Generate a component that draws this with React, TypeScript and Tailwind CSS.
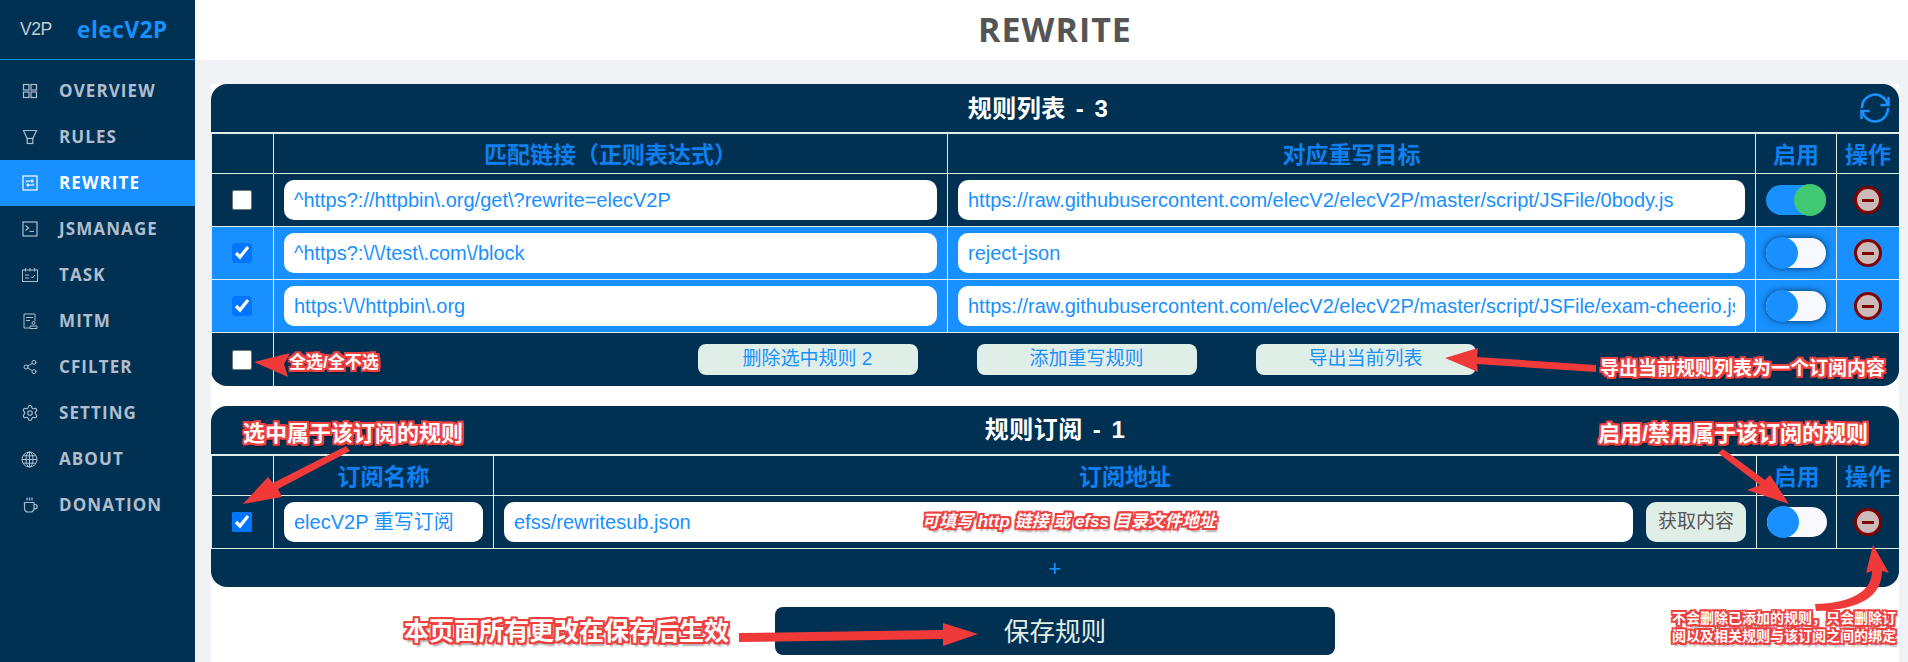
import { Settings, Share2 } from "lucide-react"
import type { ReactNode } from "react"

const NAVY = "bg-[#003153]"
const LINE = "border-[#e0eee8]"

// red outlined text the screenshot's author painted on top of the page
const noteText =
  "absolute -translate-y-1/2 whitespace-nowrap font-bold text-white [text-shadow:2px_0_0_#ef3f3f,-2px_0_0_#ef3f3f,0_2px_0_#ef3f3f,0_-2px_0_#ef3f3f,2px_2px_0_#ef3f3f,-2px_2px_0_#ef3f3f,2px_-2px_0_#ef3f3f,-2px_-2px_0_#ef3f3f,2px_4px_2px_#00000055]"

const stroke = {
  fill: "none",
  stroke: "currentColor",
  strokeWidth: 1.2,
}

const nav: { label: string; active?: boolean; icon: ReactNode }[] = [
  {
    label: "OVERVIEW",
    icon: (
      <svg viewBox="0 0 16 16" className="h-4 w-4" {...stroke}>
        <rect x="1.5" y="1.5" width="5.5" height="5.5" />
        <rect x="9" y="1.5" width="5.5" height="5.5" />
        <rect x="1.5" y="9" width="5.5" height="5.5" />
        <rect x="9" y="9" width="5.5" height="5.5" />
      </svg>
    ),
  },
  {
    label: "RULES",
    icon: (
      <svg viewBox="0 0 16 16" className="h-4 w-4" {...stroke}>
        <path d="M1.5 1.5h13L10.800 9.500H5.200z" />
        <rect x="5.200" y="9.500" width="5.600" height="5" />
      </svg>
    ),
  },
  {
    label: "REWRITE",
    active: true,
    icon: (
      <svg viewBox="0 0 16 16" className="h-4 w-4" {...stroke}>
        <rect x="1" y="1" width="14" height="14" />
        <path d="M4.500 7.500V6h6.500M9.500 4.500 11 6 9.500 7.500M11.500 8.500V10H5M6.500 11.500 5 10l1.500-1.500" />
      </svg>
    ),
  },
  {
    label: "JSMANAGE",
    icon: (
      <svg viewBox="0 0 16 16" className="h-4 w-4" {...stroke}>
        <rect x="1" y="1" width="14" height="14" />
        <path d="m3.500 4.500 3 2.500-3 2.500M7.500 10.500H12" />
      </svg>
    ),
  },
  {
    label: "TASK",
    icon: (
      <svg viewBox="0 0 16 16" className="h-4 w-4" {...stroke} strokeWidth={1}>
        <rect x="0.500" y="3" width="15" height="11.500" />
        <path d="M3.500 1v3.500M8 1v3.500M12.500 1v3.500M3 8h4M3 11h4M9 9.500l1.500 1.500L13 8" />
      </svg>
    ),
  },
  {
    label: "MITM",
    icon: (
      <svg viewBox="0 0 16 16" className="h-4 w-4" {...stroke} strokeWidth={1}>
        <path d="M8 15H2V1h11v7" />
        <path d="M4 4.500h7M4 7.500h4" />
        <circle cx="11.500" cy="10" r="1.500" />
        <path d="M8 15.500v-2.500h7v2.500z" />
      </svg>
    ),
  },
  { label: "CFILTER", icon: <Share2 className="h-4 w-4" strokeWidth={1.5} /> },
  { label: "SETTING", icon: <Settings className="h-[18px] w-[18px] shrink-0" strokeWidth={1.5} /> },
  {
    label: "ABOUT",
    icon: (
      <svg viewBox="0 0 17 17" className="h-[17px] w-[17px] shrink-0" {...stroke} strokeWidth={1}>
        <circle cx="8.500" cy="8.500" r="7.500" />
        <ellipse cx="8.500" cy="8.500" rx="3.500" ry="7.500" />
        <path d="M8.500 1v15M1 8.500h15M2 4.800h13M2 12.200h13" />
      </svg>
    ),
  },
  {
    label: "DONATION",
    icon: (
      <svg viewBox="0 0 16 16" className="h-4 w-4" {...stroke}>
        <path d="M5 0.500v3M7.500 0.500v3M10 0.500v3" />
        <path d="M2.500 5.500h9.500v6a3.500 3.500 0 0 1-3.500 3.500h-2.500a3.500 3.500 0 0 1-3.500-3.500z" />
        <path d="M12 7.500h1a1.900 1.900 0 0 1 0 4.300h-1" />
      </svg>
    ),
  },
]

const Sidebar = () => (
  <aside className={`flex w-[195px] shrink-0 flex-col ${NAVY}`}>
    <div className="flex h-[60px] items-center border-b border-[#1890ff]">
      <span className="ml-[20px] w-[57px] text-[17.500px] tracking-[-0.5px] text-[#c4ccd4]">V2P</span>
      <span className="font-['Open_Sans',sans-serif] text-[22.500px] font-bold tracking-[0.6px] text-[#1890ff]">
        elecV2P
      </span>
    </div>
    <nav className="pt-[8px]">
      {nav.map((item) => (
        <div
          key={item.label}
          className={`flex h-[46px] items-center font-['Open_Sans',sans-serif] text-[17px] font-bold tracking-[1.1px] ${
            item.active ? "bg-[#1890ff] text-white" : "text-[#b1bdcc]"
          }`}
        >
          <span className="flex w-[59px] justify-center pl-[12px] pr-[12px]">{item.icon}</span>
          {item.label}
        </div>
      ))}
    </nav>
  </aside>
)

const Cell = ({ children, className = "" }: { children?: ReactNode; className?: string }) => (
  <div className={`flex min-w-0 items-center justify-center border-l ${LINE} ${className}`}>{children}</div>
)

const Head = ({ children }: { children?: ReactNode }) => (
  <Cell className="pt-[3px] text-[23px] font-bold text-[#1080f0]">{children}</Cell>
)

const Check = ({ checked }: { checked?: boolean }) => (
  <input type="checkbox" checked={!!checked} readOnly className="mr-[1px] h-5 w-5" />
)

const Field = ({ value, className = "" }: { value: string; className?: string }) => (
  <div className={`h-10 min-w-0 flex-1 rounded-[10px] bg-white px-[10px] text-[20px] leading-10 text-[#1890ff] ${className}`}>
    <div className="overflow-hidden whitespace-nowrap">{value}</div>
  </div>
)

const Toggle = ({ on, shadow }: { on?: boolean; shadow?: boolean }) => (
  <div
    className={`flex h-[30px] w-[60px] items-center rounded-full ${on ? "justify-end bg-[#1890ff]" : "bg-[#f8f8ff]"} ${
      shadow ? "shadow-[0_0_6px_#003153]" : ""
    }`}
  >
    <div className={`h-8 w-8 shrink-0 rounded-full ${on ? "bg-[#40c872]" : "bg-[#1890ff]"}`} />
  </div>
)

const Remove = () => (
  <div className="flex h-7 w-7 items-center justify-center rounded-full border-[3px] border-[#800000] bg-[#cbbaba]">
    <div className="h-[3px] w-3 bg-[#800000]" />
  </div>
)

const FootButton = ({ children }: { children: ReactNode }) => (
  <div className="flex h-[31px] w-[220px] items-center justify-center rounded-[8px] bg-[#e0eee8] text-[19px] text-[#1890ff]">
    {children}
  </div>
)

const rules = [
  {
    match: "^https?://httpbin\\.org/get\\?rewrite=elecV2P",
    target: "https://raw.githubusercontent.com/elecV2/elecV2P/master/script/JSFile/0body.js",
    on: true,
  },
  { match: "^https?:\\/\\/test\\.com\\/block", target: "reject-json", picked: true },
  {
    match: "https:\\/\\/httpbin\\.org",
    target: "https://raw.githubusercontent.com/elecV2/elecV2P/master/script/JSFile/exam-cheerio.js",
    picked: true,
  },
]

const RuleList = () => (
  <section className={`overflow-hidden rounded-[16px] ${NAVY}`}>
    <div className="flex h-[48px] items-center pl-[5px] pr-[9px] text-white">
      <h2 className="flex-1 pt-[1px] text-center text-[24px] font-bold tracking-[0.5px] [word-spacing:3px]">规则列表 - 3</h2>
      <svg viewBox="0 0 30 30" className="h-[30px] w-[30px] text-[#1890ff]" fill="none" stroke="currentColor" strokeWidth="2.5">
        <path d="M2 15A13 13 0 0 1 27.500 11M28 15A13 13 0 0 1 2.500 19M28.500 4v8h-8M1.500 26v-8h8" />
      </svg>
    </div>
    <div className={`grid h-[41px] grid-cols-[62px_674px_808px_81px_63px] border-t-2 ${LINE}`}>
      <Head />
      <Head>匹配链接（正则表达式）</Head>
      <Head>对应重写目标</Head>
      <Head>启用</Head>
      <Head>操作</Head>
    </div>
    {rules.map((rule) => (
      <div
        key={rule.match}
        className={`grid h-[53px] grid-cols-[62px_674px_808px_81px_63px] border-t ${LINE} ${rule.picked ? "bg-[#1890ff]" : ""}`}
      >
        <Cell>
          <Check checked={rule.picked} />
        </Cell>
        <Cell className="px-[10px]">
          <Field value={rule.match} />
        </Cell>
        <Cell className="px-[10px]">
          <Field value={rule.target} />
        </Cell>
        <Cell>
          <Toggle on={rule.on} shadow={rule.picked} />
        </Cell>
        <Cell>
          <Remove />
        </Cell>
      </div>
    ))}
    <div className={`grid h-[54px] grid-cols-[62px_1fr] border-t ${LINE}`}>
      <Cell>
        <Check />
      </Cell>
      <Cell className="gap-[59px]">
        <FootButton>删除选中规则 2</FootButton>
        <FootButton>添加重写规则</FootButton>
        <FootButton>导出当前列表</FootButton>
      </Cell>
    </div>
  </section>
)

const SubList = () => (
  <section className={`mt-[20px] overflow-hidden rounded-[16px] ${NAVY}`}>
    <h2 className="flex h-[48px] items-center justify-center text-[24px] font-bold tracking-[0.5px] text-white [word-spacing:3px]">
      规则订阅 - 1
    </h2>
    <div className={`grid h-[41px] grid-cols-[62px_220px_1263px_80px_63px] border-t-2 ${LINE}`}>
      <Head />
      <Head>订阅名称</Head>
      <Head>订阅地址</Head>
      <Head>启用</Head>
      <Head>操作</Head>
    </div>
    <div className={`grid h-[53px] grid-cols-[62px_220px_1263px_80px_63px] border-t ${LINE}`}>
      <Cell>
        <Check checked />
      </Cell>
      <Cell className="px-[10px]">
        <Field value="elecV2P 重写订阅" />
      </Cell>
      <Cell className="gap-[13px] pl-[10px] pr-[10px]">
        <Field value="efss/rewritesub.json" />
        <div className="flex h-10 w-[100px] shrink-0 items-center justify-center rounded-[10px] bg-[#e0eee8] text-[19px] text-[#555555]">
          获取内容
        </div>
      </Cell>
      <Cell>
        <Toggle />
      </Cell>
      <Cell>
        <Remove />
      </Cell>
    </div>
    <div className={`flex h-[39px] items-center justify-center border-t ${LINE} text-[22px] text-[#1890ff]`}>+</div>
  </section>
)

// red arrows and notes drawn over the page
const Annotations = () => (
  <>
    <svg viewBox="0 0 1908 662" className="pointer-events-none absolute left-0 top-0 h-[662px] w-[1908px] text-[#f03a3a]" fill="currentColor">
      <path d="M254 362 290 353 284 364 288 377z" />
      <path d="M1445 358 1478 348 1477 357 1596 365 1596 372 1477 364 1478 372z" />
      <path d="M243 504 268 477 273 483 346 446 350 451 278 489 282 497z" />
      <path d="M1789 504 1770 475 1765 480 1723 449 1718 453 1760 485 1747 490z" />
      <path d="M978 634 943 623 943 630 739 633 739 642 943 639 943 646z" />
      <path d="M1873 545 1866 573 1872 571C1872 592 1850 603 1815 604L1816 611C1862 610 1882 595 1882 571L1889 573z" />
    </svg>
    <span className={`${noteText} left-[289px] top-[363px] text-[17px]`}>全选/全不选</span>
    <span className={`${noteText} left-[1600px] top-[369px] text-[19px]`}>导出当前规则列表为一个订阅内容</span>
    <span className={`${noteText} left-[243px] top-[433px] text-[22px]`}>选中属于该订阅的规则</span>
    <span className={`${noteText} left-[1598px] top-[433px] text-[22px]`}>启用/禁用属于该订阅的规则</span>
    <span className={`${noteText} left-[922px] top-[522px] text-[17px] italic`}>可填写 http 链接 或 efss 目录文件地址</span>
    <span className={`${noteText} left-[404px] top-[632px] text-[25px]`}>本页面所有更改在保存后生效</span>
    <span className={`${noteText} left-[1672px] top-[627px] text-[14px] leading-[18px]`}>
      不会删除已添加的规则，只会删除订
      <br />
      阅以及相关规则与该订阅之间的绑定
    </span>
  </>
)

export default function App() {
  return (
    <div className="relative flex h-[662px] w-[1908px] overflow-hidden font-['Liberation_Sans','Noto_Sans_CJK_SC',sans-serif]">
      <Sidebar />
      <main className="flex min-w-0 flex-1 flex-col bg-[#f0f2f5]">
        <header className="flex h-[60px] shrink-0 items-center justify-center bg-white pb-[1px] pl-[16px] pr-[9px] font-['Open_Sans',sans-serif] text-[34px] font-bold tracking-[1px] text-[#555555]">
          REWRITE
        </header>
        <div className="ml-[16px] mr-[9px] mt-[24px] flex-1 bg-white">
          <RuleList />
          <SubList />
          <div className={`mx-auto mt-[20px] flex h-12 w-[560px] items-center justify-center rounded-[8px] pt-[3px] ${NAVY} text-[25.6px] text-[#e0eee8]`}>
            保存规则
          </div>
        </div>
      </main>
      <Annotations />
    </div>
  )
}
